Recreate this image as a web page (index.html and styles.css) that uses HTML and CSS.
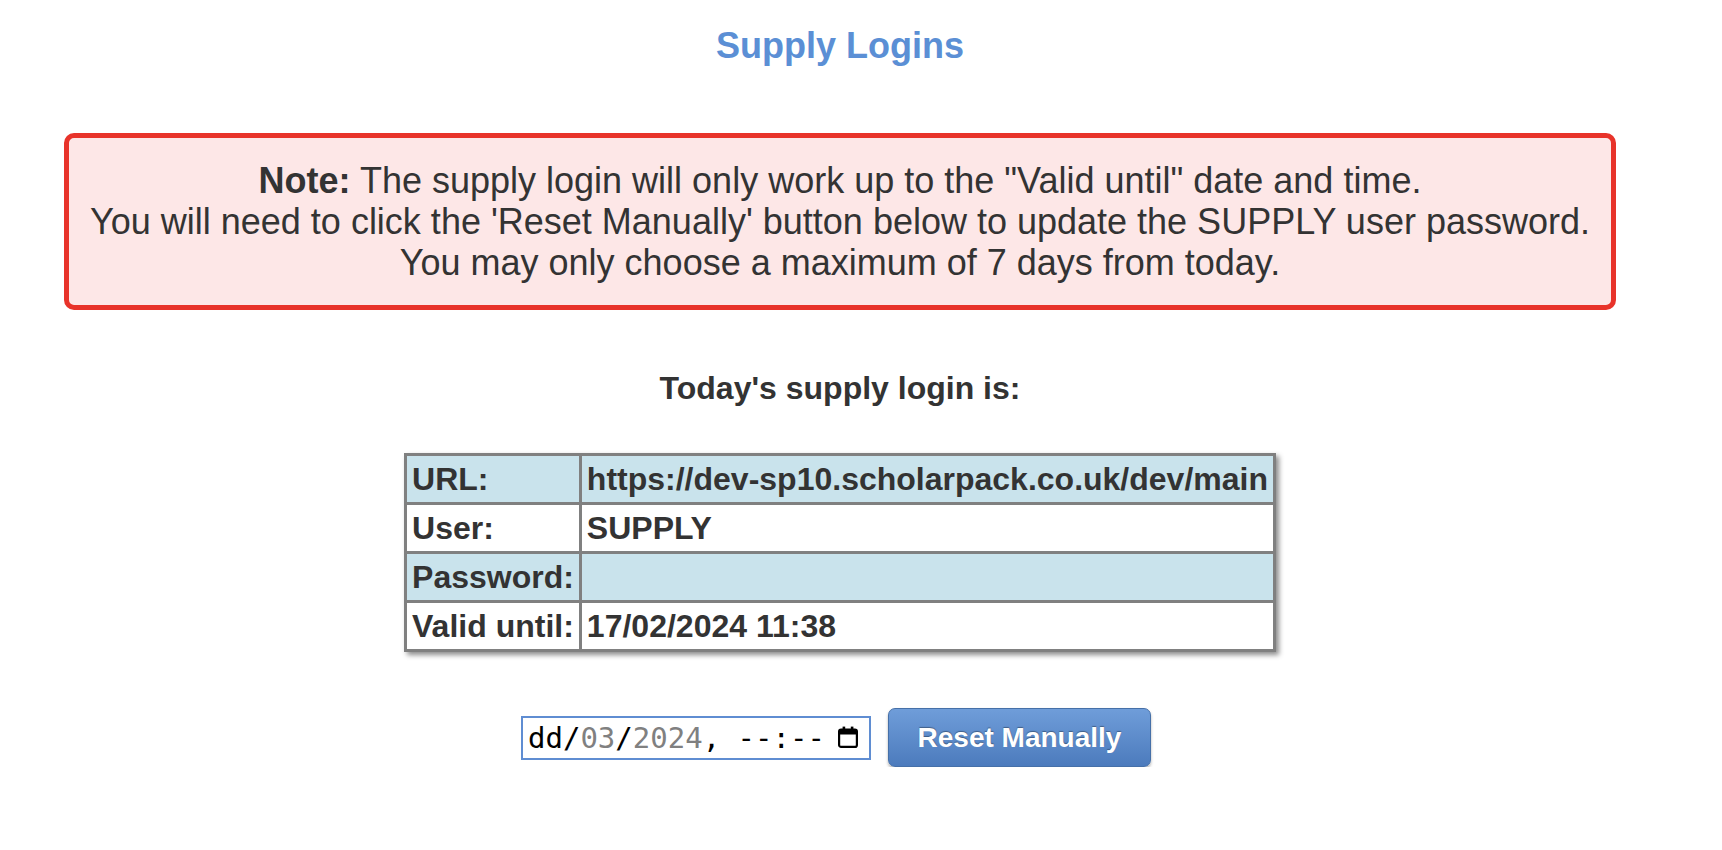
FILE: index.html
```html
<!DOCTYPE html>
<html lang="en">
<head>
    <meta charset="UTF-8">
    <meta name="viewport" content="width=device-width, initial-scale=1.0">
    <title>Supply Logins</title>
    <link rel="stylesheet" href="styles.css">
</head>
<body>
    <div class="page">
        <h1 class="title">Supply Logins</h1>

        <div class="note">
            <b>Note:</b> The supply login will only work up to the "Valid until" date and time.<br>
            You will need to click the 'Reset Manually' button below to update the SUPPLY user password.<br>
            You may only choose a maximum of 7 days from today.
        </div>

        <h3 class="login-heading">Today's supply login is:</h3>

        <table class="login-table">
            <tr class="shaded">
                <td>URL:</td>
                <td>https://dev-sp10.scholarpack.co.uk/dev/main</td>
            </tr>
            <tr>
                <td>User:</td>
                <td>SUPPLY</td>
            </tr>
            <tr class="shaded">
                <td>Password:</td>
                <td></td>
            </tr>
            <tr>
                <td>Valid until:</td>
                <td>17/02/2024 11:38</td>
            </tr>
        </table>

        <div class="reset-row">
            <div class="date-input">
                <span class="date-value">dd/<span class="filled">03</span>/<span class="filled">2024</span>, --:--</span>
                <svg class="cal-icon" width="22" height="23" viewBox="0 0 22 23">
                    <rect x="2.1" y="3.6" width="17.8" height="17.3" rx="2" fill="none" stroke="#000" stroke-width="2.2"/>
                    <rect x="2" y="3.5" width="18" height="5" fill="#000"/>
                    <rect x="5.6" y="0.6" width="2.6" height="4" fill="#000"/>
                    <rect x="13.8" y="0.6" width="2.6" height="4" fill="#000"/>
                </svg>
            </div>
            <button type="button" class="reset-btn">Reset Manually</button>
        </div>
    </div>
</body>
</html>
```

FILE: styles.css
```css
* {
    box-sizing: border-box;
}

body {
    margin: 0;
    font-family: 'Liberation Sans', Arial, Helvetica, sans-serif;
    color: #333;
    background: #fff;
}

.page {
    width: 1680px;
    padding-top: 25px;
}

.title {
    margin: 0;
    font-size: 36px;
    line-height: 41px;
    font-weight: bold;
    color: #5b8fd5;
    text-align: center;
}

.note {
    margin: 67px 64px 0;
    padding: 22px 20px;
    border: 5px solid #e8332a;
    border-radius: 10px;
    background: #fde7e7;
    font-size: 36px;
    line-height: 41px;
    text-align: center;
}

.login-heading {
    margin: 60px 0 46px;
    font-size: 32px;
    line-height: 37px;
    font-weight: bold;
    text-align: center;
}

.login-table {
    margin: 0 auto;
    border-collapse: collapse;
    box-shadow: 3px 3px 5px rgba(0, 0, 0, 0.45);
}

.login-table td {
    border: 3px solid #808080;
    padding: 4px 5px;
    font-size: 32px;
    line-height: 38px;
    font-weight: bold;
    white-space: nowrap;
    background: #fff;
}

.login-table tr.shaded td {
    background: #c9e3ec;
}

.reset-row {
    display: flex;
    justify-content: center;
    align-items: center;
    gap: 17px;
    margin-top: 56px;
    padding-right: 8px;
}

.date-input {
    display: flex;
    align-items: center;
    width: 350px;
    height: 44px;
    padding: 0 10px 0 5px;
    border: 2px solid #5f8dd2;
    background: #fff;
}

.date-value {
    font-family: 'DejaVu Sans Mono', 'Liberation Mono', monospace;
    font-size: 29px;
    line-height: 34px;
    color: #000;
    white-space: pre;
}

.date-value .filled {
    color: #808080;
}

.cal-icon {
    flex-shrink: 0;
    margin-left: auto;
}

.reset-btn {
    width: 263px;
    height: 59px;
    border: 1px solid #4670a8;
    border-radius: 7px;
    background: linear-gradient(to bottom, #6f9dd9 0%, #4c7bbd 100%);
    box-shadow: 0 2px 3px rgba(0, 0, 0, 0.3);
    color: #fff;
    font-family: 'Liberation Sans', Arial, Helvetica, sans-serif;
    font-size: 28px;
    font-weight: bold;
    text-shadow: 0 -1px 1px rgba(0, 0, 0, 0.35);
    cursor: pointer;
}
```
